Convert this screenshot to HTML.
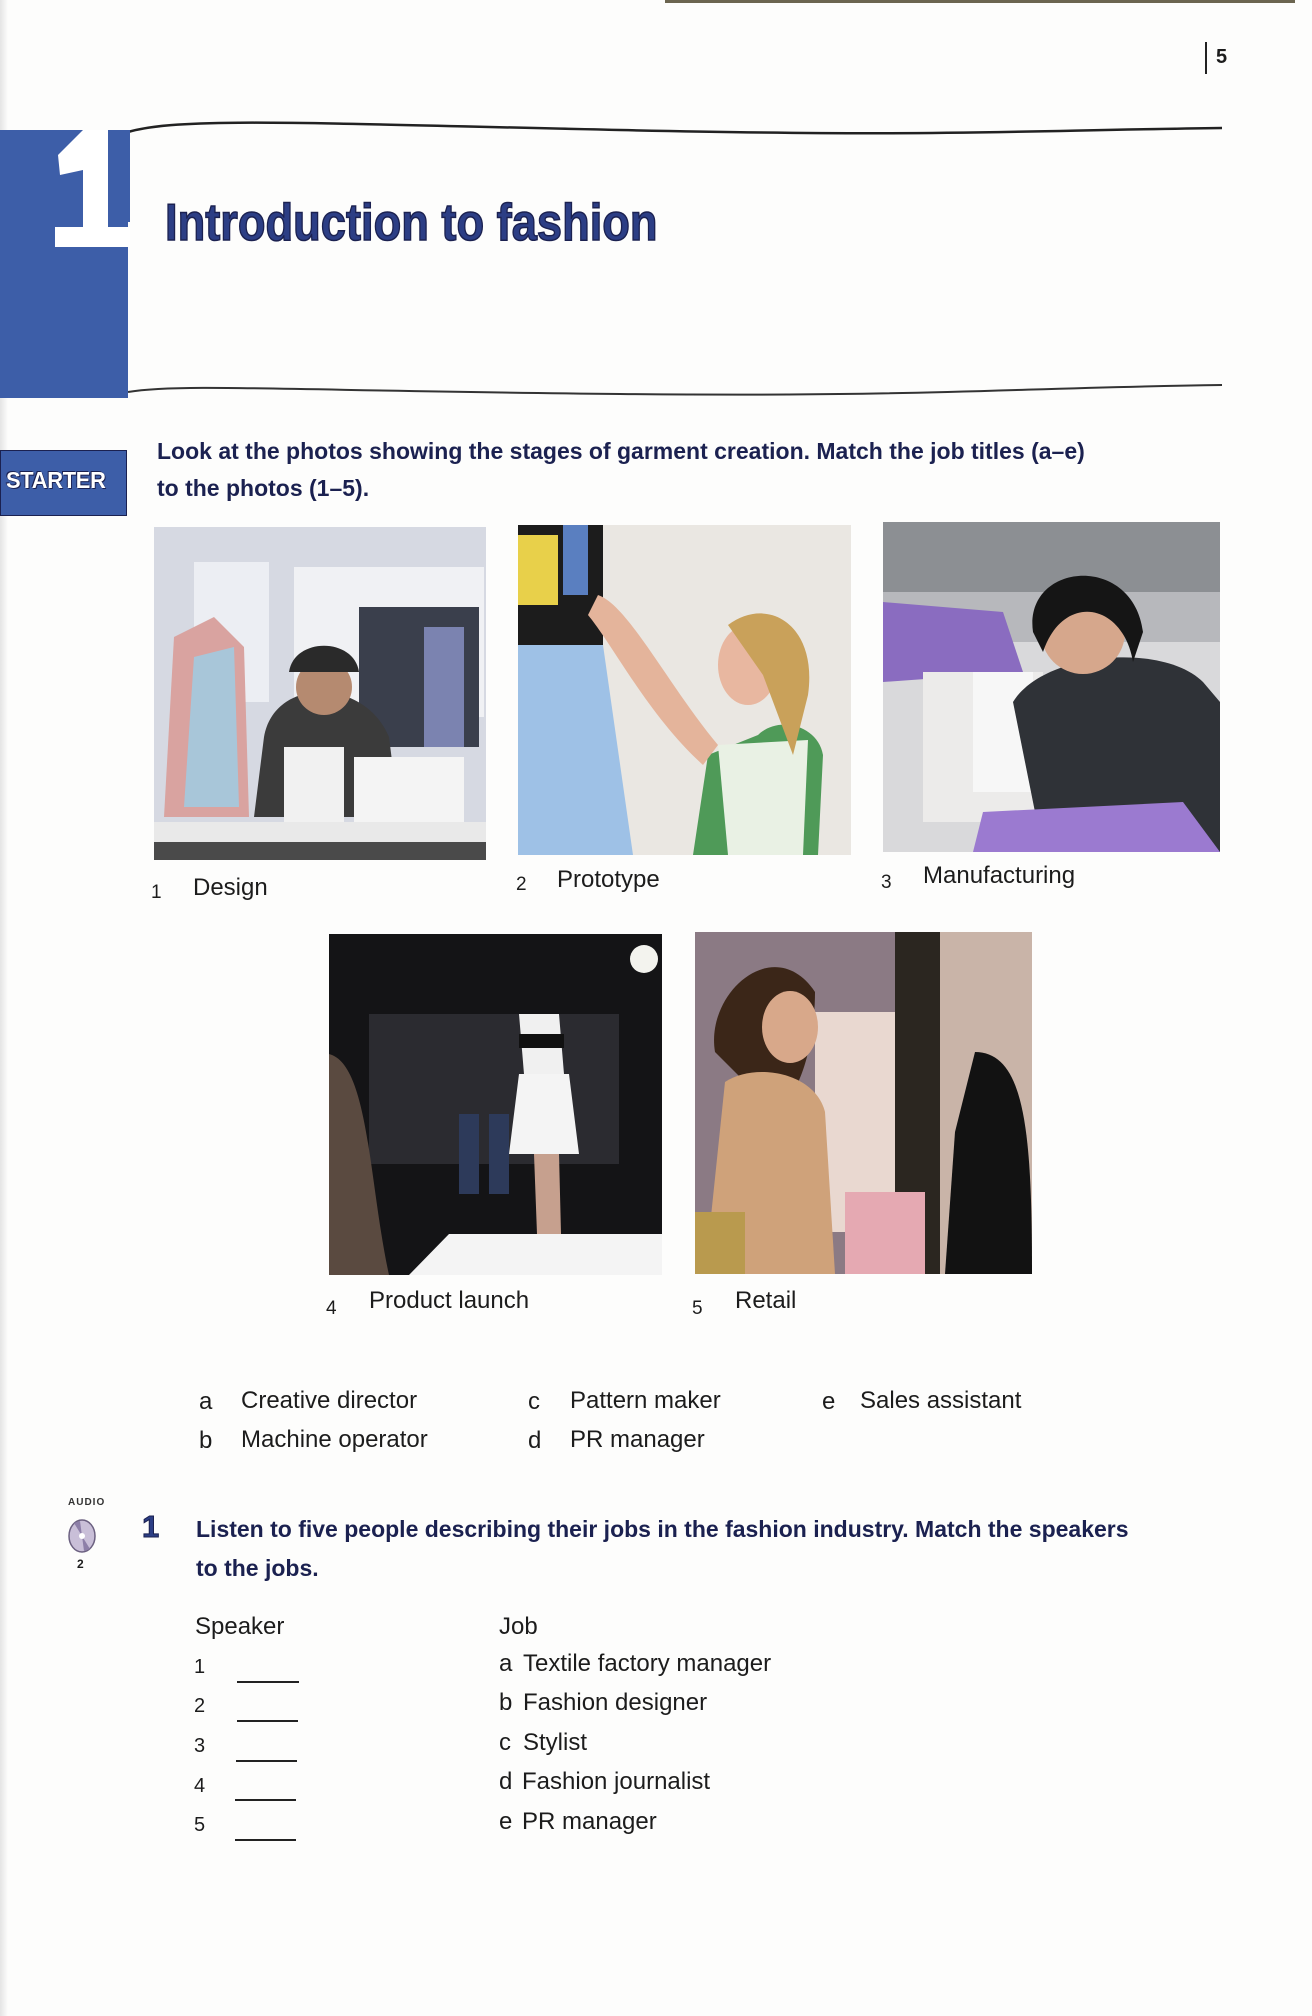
<!DOCTYPE html>
<html><head><meta charset="utf-8"><style>
html,body{margin:0;padding:0;}
body{width:1312px;height:2016px;position:relative;background:#fdfdfc;font-family:"Liberation Sans",sans-serif;color:#1c1c1c;overflow:hidden;}
.a{position:absolute;white-space:nowrap;}
.t{font-size:24px;line-height:28px;}
.b{font-weight:bold;color:#1b2150;font-size:23px;letter-spacing:0;line-height:26px;}
.ph{position:absolute;overflow:hidden;}
</style></head><body>
<div class="a" style="left:0;top:0;width:8px;height:2016px;background:linear-gradient(90deg,#e4e4e4,#fdfdfc);"></div>
<div class="a" style="left:665px;top:0;width:630px;height:3px;background:#6b6550;"></div>
<div class="a" style="left:1205px;top:42px;width:2px;height:32px;background:#222;"></div>
<div class="a" style="left:1216px;top:46px;font-size:20px;font-weight:bold;">5</div>

<svg class="a" style="left:0;top:115px" width="1230" height="290">
<path d="M128 17 C180 2, 300 8, 620 15 S1000 16,1222 13" stroke="#222" stroke-width="2.5" fill="none"/>
<path d="M128 277 C180 268, 300 276, 620 279 S1000 273,1222 270" stroke="#333" stroke-width="2" fill="none"/>
<rect x="0" y="15" width="128" height="268" fill="#3d5ea8"/>
<path d="M58 40 L83 15 L108 15 L108 112 L130 112 L130 132 L55 132 L55 112 L83 112 L83 55 L60 60 Z" fill="#fff"/>
<rect x="108" y="15" width="22" height="92" fill="#3d5ea8"/>
</svg>
<div class="a" style="left:165px;top:193px;font-size:52px;font-weight:bold;color:#2c3e85;transform:scaleX(0.87);transform-origin:left;-webkit-text-stroke:1.5px #1b2150;">Introduction to fashion</div>

<div class="a" style="left:0;top:450px;width:125px;height:64px;background:#3d5ea8;border:1px solid #1b2150;"></div>
<div class="a" style="left:6px;top:467px;font-size:23px;font-weight:bold;color:#fff;letter-spacing:-0.3px;text-shadow:0 0 1px #1b2150,1px 1px 0 #1b2150,-1px -1px 0 #1b2150;transform:scaleX(0.95);transform-origin:left;">STARTER</div>
<div class="a b" style="left:157px;top:438px;">Look at the photos showing the stages of garment creation. Match the job titles (a–e)</div>
<div class="a b" style="left:157px;top:475px;">to the photos (1–5).</div>

<!-- photo 1 -->
<div class="ph" style="left:154px;top:527px;width:332px;height:333px;background:#d8dbe4;">
<svg width="332" height="333"><rect width="332" height="333" fill="#d6d9e2"/><rect x="40" y="35" width="75" height="140" fill="#eceef3"/><rect x="140" y="40" width="190" height="150" fill="#f0f1f4"/>
<rect x="205" y="80" width="120" height="140" fill="#3a3f4c"/><rect x="270" y="100" width="40" height="120" fill="#7b83b0"/>
<path d="M20 110 L60 90 L90 120 L95 290 L10 290Z" fill="#d9a3a0"/><path d="M40 130 L80 120 L85 280 L30 280Z" fill="#a8c6d9"/>
<path d="M110 210 C120 150 210 150 235 210 L245 290 L100 290Z" fill="#3b3b3b"/><rect x="130" y="220" width="60" height="80" fill="#f1f1f1"/>
<circle cx="170" cy="160" r="28" fill="#b58a70"/><path d="M135 145 C140 110 200 110 205 145Z" fill="#2a2a2a"/>
<rect x="200" y="230" width="110" height="80" fill="#f4f4f4"/><rect x="0" y="295" width="332" height="38" fill="#e9e9e9"/><rect x="0" y="315" width="332" height="18" fill="#4a4a4a"/></svg></div>
<!-- photo 2 -->
<div class="ph" style="left:518px;top:525px;width:333px;height:330px;">
<svg width="333" height="330"><rect width="333" height="330" fill="#eae7e2"/><rect x="0" y="0" width="85" height="120" fill="#1c1c1c"/><rect x="0" y="10" width="40" height="70" fill="#e8d04a"/><rect x="45" y="0" width="25" height="70" fill="#5a7fc0"/>
<path d="M0 120 L85 120 L115 330 L0 330Z" fill="#9ec1e6"/>
<path d="M240 210 C260 190 300 200 305 230 L300 330 L175 330 L190 230Z" fill="#4f9a58"/><path d="M200 220 L290 215 L285 330 L210 330Z" fill="#e9f1e4"/>
<ellipse cx="230" cy="140" rx="30" ry="40" fill="#e8b7a0"/><path d="M210 100 C250 70 300 100 290 170 L275 230 L245 150Z" fill="#c9a15a"/>
<path d="M80 70 C110 80 150 160 200 220 L185 240 C130 190 95 120 70 90Z" fill="#e4b49b"/></svg></div>
<!-- photo 3 -->
<div class="ph" style="left:883px;top:522px;width:337px;height:330px;">
<svg width="337" height="330"><rect width="337" height="330" fill="#d9d9db"/><rect width="337" height="70" fill="#8c8f93"/><rect y="70" width="337" height="50" fill="#b7b8bc"/>
<path d="M0 80 L120 90 L140 150 L0 160Z" fill="#8a6cc0"/><rect x="40" y="150" width="120" height="150" fill="#ecebea"/><rect x="90" y="150" width="60" height="120" fill="#f7f7f7"/>
<path d="M130 180 C160 130 280 120 320 160 L337 180 L337 330 L160 330Z" fill="#2f3237"/>
<circle cx="200" cy="110" r="42" fill="#d6a78c"/><path d="M150 110 C140 40 250 30 260 110 L250 140 C240 80 180 70 160 130Z" fill="#151515"/>
<path d="M100 290 L300 280 L337 330 L90 330Z" fill="#9b7ad0"/></svg></div>
<div class="a t" style="left:151px;top:877px;"><span style="font-size:19px">1</span></div><div class="a t" style="left:193px;top:874px;">Design</div>
<div class="a t" style="left:516px;top:869px;"><span style="font-size:19px">2</span></div><div class="a t" style="left:557px;top:866px;">Prototype</div>
<div class="a t" style="left:881px;top:867px;"><span style="font-size:19px">3</span></div><div class="a t" style="left:923px;top:862px;">Manufacturing</div>

<!-- photo 4 -->
<div class="ph" style="left:329px;top:934px;width:333px;height:341px;">
<svg width="333" height="341"><rect width="333" height="341" fill="#141416"/><circle cx="315" cy="25" r="14" fill="#f3f3ee"/>
<rect x="40" y="80" width="250" height="150" fill="#2b2b30"/><path d="M0 120 C40 130 40 250 60 341 L0 341Z" fill="#5a4a40"/>
<rect x="130" y="180" width="20" height="80" fill="#2d3a5a"/><rect x="160" y="180" width="20" height="80" fill="#2d3a5a"/>
<path d="M190 80 L230 80 L235 140 L195 140Z" fill="#f0f0f0"/><rect x="190" y="100" width="45" height="14" fill="#111"/><path d="M190 140 L240 140 L250 220 L180 220Z" fill="#f4f4f4"/>
<path d="M205 220 L230 220 L232 300 L208 300Z" fill="#c6a08e"/><path d="M120 300 L333 300 L333 341 L80 341Z" fill="#f4f4f4"/></svg></div>
<!-- photo 5 -->
<div class="ph" style="left:695px;top:932px;width:337px;height:342px;">
<svg width="337" height="342"><rect width="337" height="342" fill="#8b7a84"/><rect x="120" y="80" width="90" height="220" fill="#e9d8d0"/><rect x="200" y="0" width="45" height="342" fill="#2b2620"/><rect x="245" y="0" width="92" height="342" fill="#c9b4a8"/>
<path d="M20 120 C10 60 80 0 120 60 C120 100 110 160 80 180Z" fill="#3b2618"/>
<ellipse cx="95" cy="95" rx="28" ry="36" fill="#d8a88a"/>
<path d="M30 150 C60 130 120 140 130 180 L140 342 L10 342Z" fill="#cfa27a"/>
<path d="M280 120 C330 120 337 200 337 342 L250 342 L260 200Z" fill="#121212"/>
<rect x="150" y="260" width="80" height="82" fill="#e5a9b2"/><rect x="0" y="280" width="50" height="62" fill="#b99a4e"/></svg></div>
<div class="a t" style="left:326px;top:1293px;"><span style="font-size:19px">4</span></div><div class="a t" style="left:369px;top:1287px;">Product launch</div>
<div class="a t" style="left:692px;top:1293px;"><span style="font-size:19px">5</span></div><div class="a t" style="left:735px;top:1287px;">Retail</div>

<div class="a t" style="left:199px;top:1388px;">a</div><div class="a t" style="left:241px;top:1387px;">Creative director</div>
<div class="a t" style="left:199px;top:1427px;">b</div><div class="a t" style="left:241px;top:1426px;">Machine operator</div>
<div class="a t" style="left:528px;top:1388px;">c</div><div class="a t" style="left:570px;top:1387px;">Pattern maker</div>
<div class="a t" style="left:528px;top:1427px;">d</div><div class="a t" style="left:570px;top:1426px;">PR manager</div>
<div class="a t" style="left:822px;top:1388px;">e</div><div class="a t" style="left:860px;top:1387px;">Sales assistant</div>

<div class="a" style="left:68px;top:1497px;font-size:10px;font-weight:bold;letter-spacing:1px;color:#333;">AUDIO</div>
<svg class="a" style="left:68px;top:1519px" width="32" height="38"><ellipse cx="14" cy="17" rx="13" ry="16" fill="#c9bfd8" stroke="#6b6080" stroke-width="1.5"/><path d="M14 17 L6 4 L12 2Z M14 17 L22 30 L16 32Z" fill="#8d7fa8"/><circle cx="14" cy="17" r="3" fill="#fff"/></svg>
<div class="a" style="left:77px;top:1557px;font-size:12px;font-weight:bold;">2</div>
<div class="a" style="left:142px;top:1509px;font-size:31px;font-weight:bold;color:#2c3e85;-webkit-text-stroke:1px #1b2150;">1</div>
<div class="a b" style="left:196px;top:1516px;">Listen to five people describing their jobs in the fashion industry. Match the speakers</div>
<div class="a b" style="left:196px;top:1555px;">to the jobs.</div>

<div class="a t" style="left:195px;top:1613px;">Speaker</div>
<div class="a t" style="left:499px;top:1613px;">Job</div>
<div class="a t" style="left:194px;top:1653px;font-size:20px;">1</div><div class="a" style="left:237px;top:1681px;width:62px;height:2px;background:#222"></div>
<div class="a t" style="left:194px;top:1692px;font-size:20px;">2</div><div class="a" style="left:237px;top:1720px;width:61px;height:2px;background:#222"></div>
<div class="a t" style="left:194px;top:1732px;font-size:20px;">3</div><div class="a" style="left:236px;top:1760px;width:61px;height:2px;background:#222"></div>
<div class="a t" style="left:194px;top:1772px;font-size:20px;">4</div><div class="a" style="left:235px;top:1799px;width:61px;height:2px;background:#222"></div>
<div class="a t" style="left:194px;top:1811px;font-size:20px;">5</div><div class="a" style="left:235px;top:1839px;width:61px;height:2px;background:#222"></div>
<div class="a t" style="left:499px;top:1650px;">a</div><div class="a t" style="left:523px;top:1650px;">Textile factory manager</div>
<div class="a t" style="left:499px;top:1689px;">b</div><div class="a t" style="left:523px;top:1689px;">Fashion designer</div>
<div class="a t" style="left:499px;top:1729px;">c</div><div class="a t" style="left:523px;top:1729px;">Stylist</div>
<div class="a t" style="left:499px;top:1768px;">d</div><div class="a t" style="left:522px;top:1768px;">Fashion journalist</div>
<div class="a t" style="left:499px;top:1808px;">e</div><div class="a t" style="left:522px;top:1808px;">PR manager</div>
</body></html>
